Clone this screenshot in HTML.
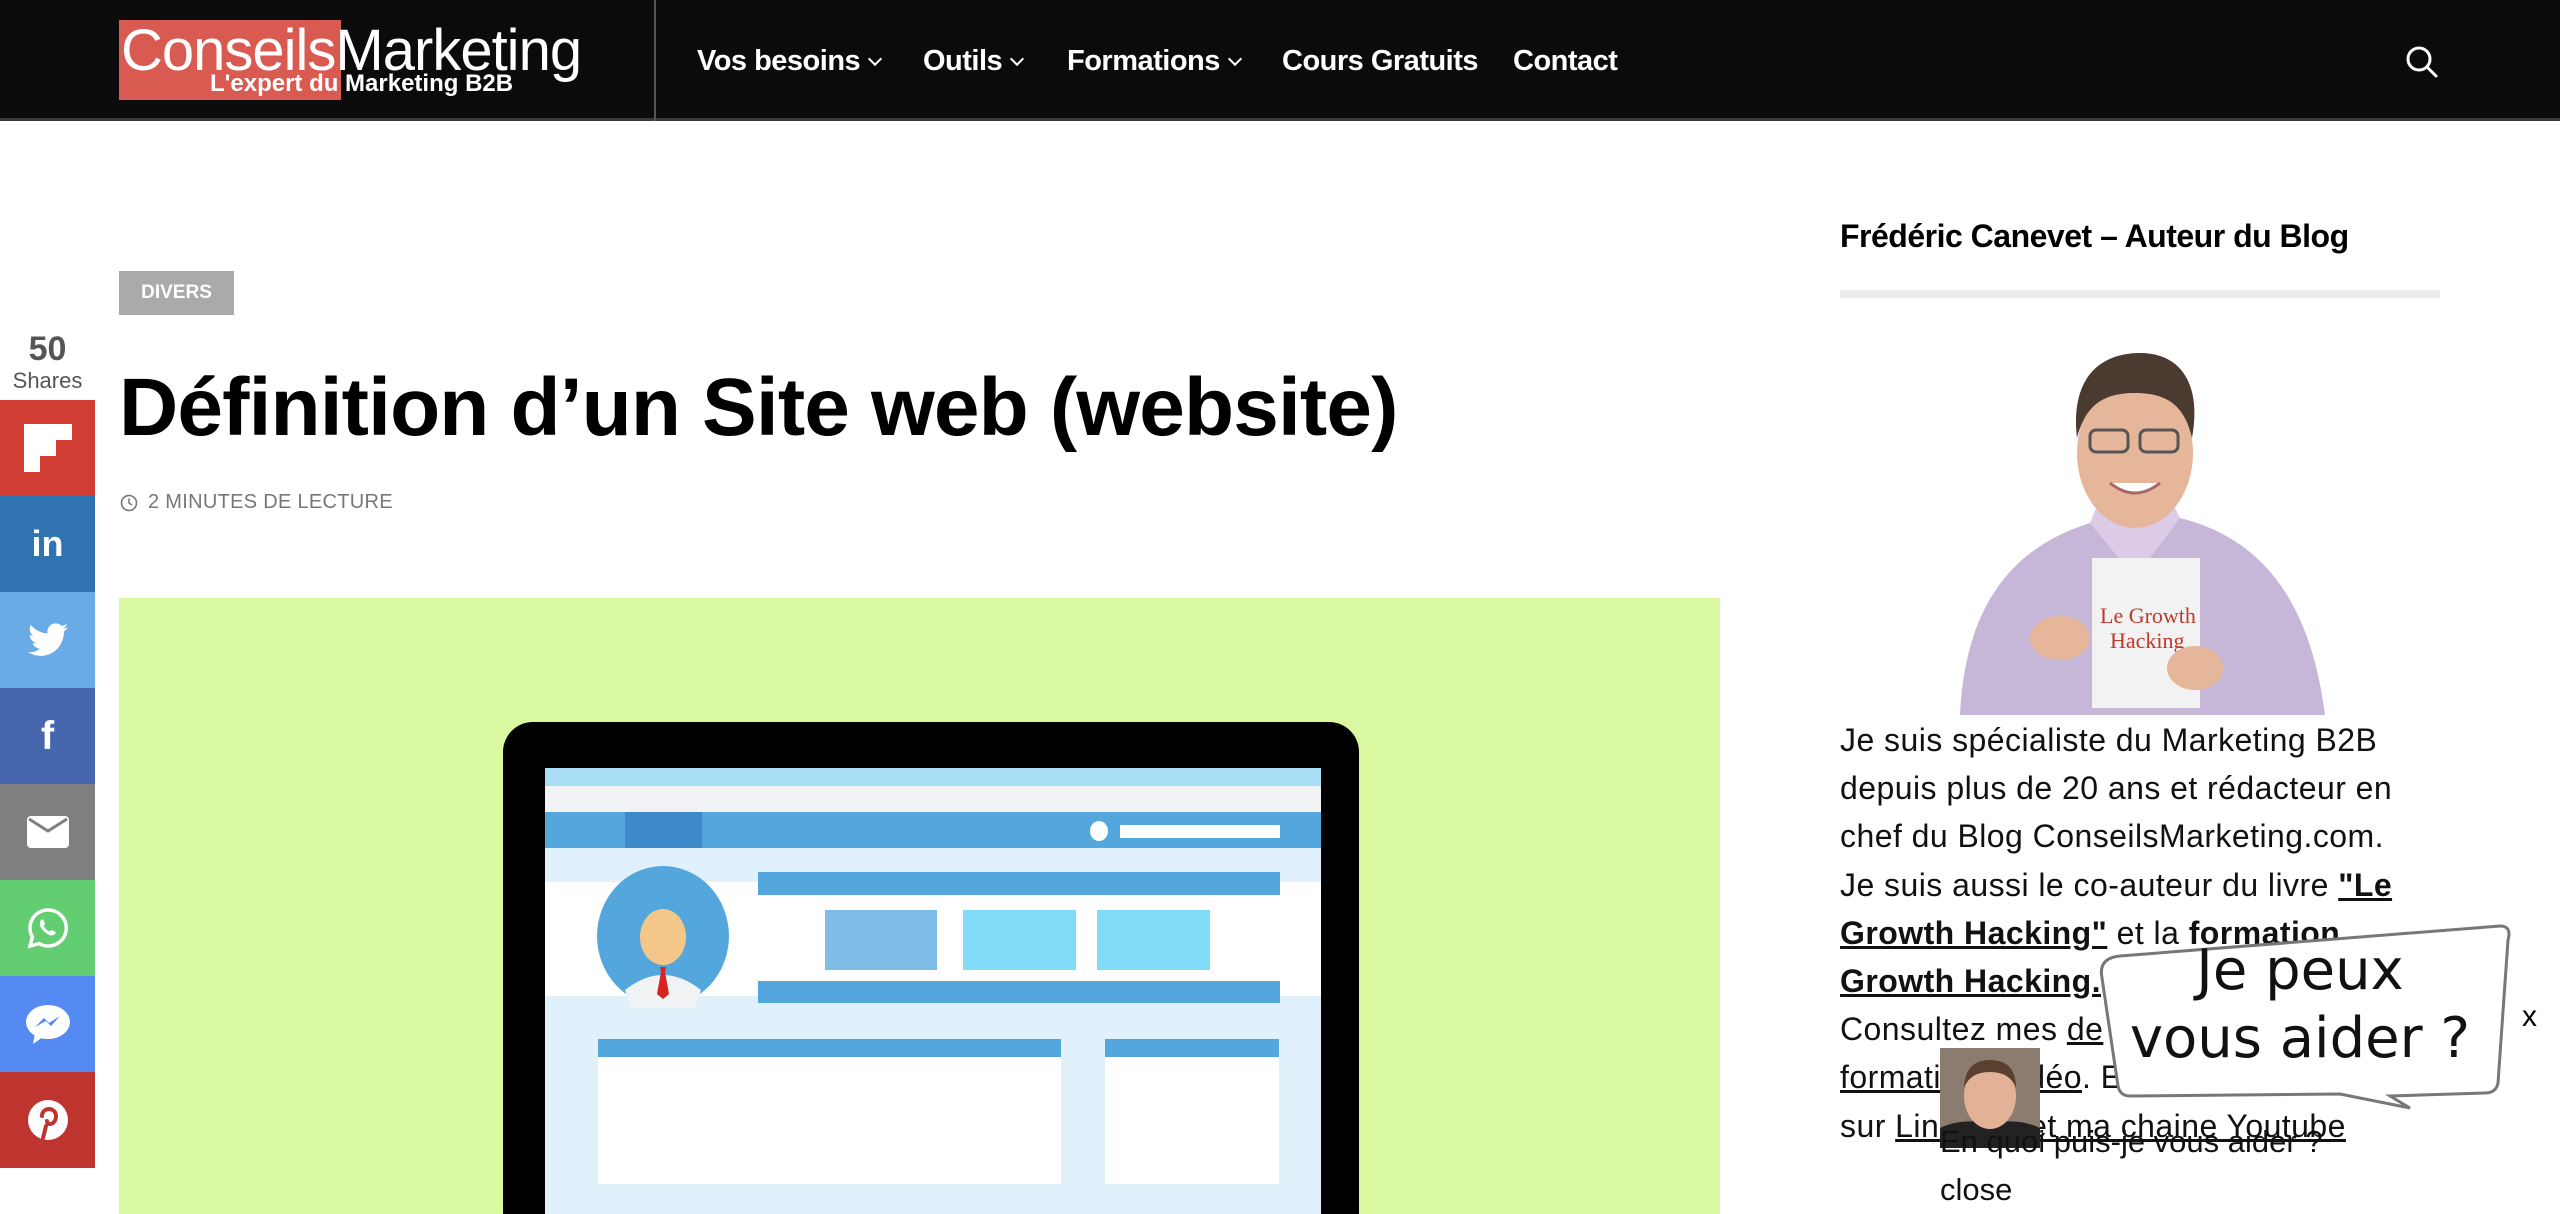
<!DOCTYPE html>
<html><head><meta charset="utf-8">
<style>
*{margin:0;padding:0;box-sizing:border-box}
body{width:2560px;height:1214px;overflow:hidden;background:#fff;font-family:"Liberation Sans",sans-serif;position:relative;color:#000}
.hdr{position:absolute;left:0;top:0;width:2560px;height:121px;background:#0b0b0b;border-bottom:3px solid #3a3a3a}
.nav{position:absolute;top:45px;color:#fff;font-weight:bold;font-size:29px;letter-spacing:-0.5px;white-space:nowrap}
.chev{display:inline-block;width:10px;height:10px;border-right:2.5px solid #fff;border-bottom:2.5px solid #fff;transform:rotate(45deg);margin-left:10px;position:relative;top:-6px}
.abs{position:absolute}
.sb{position:absolute;left:0;width:95px;height:96px;display:flex;align-items:center;justify-content:center}
.side{position:absolute;left:1840px;top:716px;font-size:32px;letter-spacing:0.45px;line-height:48.2px;white-space:nowrap;color:#111}
.side u,.side b{text-decoration:underline}
</style></head><body>
<div class="hdr"></div>
<!-- logo -->
<div class="abs" style="left:119px;top:20px;width:222px;height:80px;background:#d85a50"></div>
<div class="abs" style="left:121px;top:16px;font-size:58px;color:#fff;letter-spacing:-1px;white-space:nowrap;line-height:70px">ConseilsMarketing</div>
<div class="abs" style="left:210px;top:70px;font-size:24px;color:#fff;font-weight:bold;white-space:nowrap">L'expert du Marketing B2B</div>
<div class="abs" style="left:654px;top:0;width:2px;height:121px;background:#555"></div>
<div class="nav" style="left:697px">Vos besoins<span class="chev"></span></div>
<div class="nav" style="left:923px">Outils<span class="chev"></span></div>
<div class="nav" style="left:1067px">Formations<span class="chev"></span></div>
<div class="nav" style="left:1282px">Cours Gratuits</div>
<div class="nav" style="left:1513px">Contact</div>
<svg class="abs" style="left:2404px;top:44px" width="36" height="36" viewBox="0 0 36 36"><circle cx="15" cy="15" r="11" fill="none" stroke="#fff" stroke-width="3"/><line x1="23" y1="23" x2="32" y2="32" stroke="#fff" stroke-width="3" stroke-linecap="round"/></svg>

<!-- share bar -->
<div class="abs" style="left:0;top:330px;width:95px;text-align:center;font-size:34px;color:#555;font-weight:bold;line-height:38px">50</div>
<div class="abs" style="left:0;top:368px;width:95px;text-align:center;font-size:22px;color:#555">Shares</div>
<div class="sb" style="top:400px;background:#d13c33"><svg width="48" height="48" viewBox="0 0 48 48"><path d="M0 0H48V16H32V32H16V48H0Z" fill="#fff"/></svg></div>
<div class="sb" style="top:496px;background:#2f74b0;color:#fff;font-weight:bold;font-size:36px">in</div>
<div class="sb" style="top:592px;background:#69abe7"><svg width="40" height="34" viewBox="0 0 24 20"><path d="M24 2.4a10 10 0 0 1-2.8.8A5 5 0 0 0 23.3.4a10 10 0 0 1-3.1 1.2A4.9 4.9 0 0 0 11.8 6 14 14 0 0 1 1.7.9a4.9 4.9 0 0 0 1.5 6.6A4.9 4.9 0 0 1 1 6.9a4.9 4.9 0 0 0 3.9 4.8 4.9 4.9 0 0 1-2.2.1 4.9 4.9 0 0 0 4.6 3.4A9.900 9.900 0 0 1 0 17.3 14 14 0 0 0 7.5 19.5c9.100 0 14-7.500 14-14v-.6A10 10 0 0 0 24 2.4z" fill="#fff"/></svg></div>
<div class="sb" style="top:688px;background:#4666ad;color:#fff;font-weight:bold;font-size:40px">f</div>
<div class="sb" style="top:784px;background:#7f7f7f"><svg width="42" height="32" viewBox="0 0 42 32"><rect width="42" height="32" rx="4" fill="#fff"/><path d="M2 3L21 15L40 3" fill="none" stroke="#7f7f7f" stroke-width="3"/></svg></div>
<div class="sb" style="top:880px;background:#63cd72"><svg width="42" height="42" viewBox="0 0 42 42"><path d="M21 3a18 18 0 0 0-15.6 27L3 39l9.300-2.400A18 18 0 1 0 21 3z" fill="none" stroke="#fff" stroke-width="3.5"/><path d="M14 13c1-1 2-1 3 1l1 3-1.500 1.500c1 2.500 3.500 5 6 6L24 23l3 1c2 1 2 2 1 3-2 2-5 2-9-1s-6-6-6-9c0-1.500 0-3 1-4z" fill="#fff"/></svg></div>
<div class="sb" style="top:976px;background:#548af1"><svg width="46" height="42" viewBox="0 0 46 42"><ellipse cx="23" cy="19" rx="22" ry="17" fill="#fff"/><path d="M10 30L8 41L18 34Z" fill="#fff"/><path d="M10 24L19 15L24 20L35 13L26 23L21 18Z" fill="#548af1"/></svg></div>
<div class="sb" style="top:1072px;background:#be3530"><svg width="42" height="42" viewBox="0 0 42 42"><circle cx="21" cy="21" r="20" fill="#fff"/><path d="M19 27l-3 12M15 17c0-4 3-7 7-7 4 0 7 3 7 7 0 5-3 8-6 8-2 0-3-1-3-3" fill="none" stroke="#be3530" stroke-width="4" stroke-linecap="round"/></svg></div>

<!-- article -->
<div class="abs" style="left:119px;top:271px;width:115px;height:44px;background:#aaa;color:#fff;font-size:19px;font-weight:bold;text-align:center;line-height:44px">DIVERS</div>
<div class="abs" style="left:119px;top:358px;font-size:82px;font-weight:bold;letter-spacing:-0.85px;white-space:nowrap;line-height:100px">Définition d’un Site web (website)</div>
<svg class="abs" style="left:120px;top:494px" width="18" height="18" viewBox="0 0 18 18"><circle cx="9" cy="9" r="7.500" fill="none" stroke="#777" stroke-width="1.600"/><path d="M9 4.500V9L12 11" fill="none" stroke="#777" stroke-width="1.600"/></svg>
<div class="abs" style="left:148px;top:491px;font-size:20px;color:#777;letter-spacing:0.3px">2 MINUTES DE LECTURE</div>

<!-- image -->
<div class="abs" style="left:119px;top:598px;width:1601px;height:616px;background:#d9f8a0;overflow:hidden">
<svg width="1601" height="616" viewBox="119 598 1601 616">
<rect x="503" y="722" width="856" height="520" rx="30" fill="#000"/>
<rect x="545" y="768" width="776" height="460" fill="#e1f1fb"/>
<rect x="545" y="768" width="776" height="18" fill="#a9ddf6"/>
<rect x="545" y="786" width="776" height="26" fill="#f1f2f3"/>
<rect x="545" y="812" width="776" height="36" fill="#54a7dd"/>
<rect x="625" y="812" width="77" height="36" fill="#3d89c9"/>
<ellipse cx="1099" cy="831" rx="9" ry="10" fill="#fff"/>
<rect x="1120" y="825" width="160" height="13" fill="#fff"/>
<rect x="545" y="882" width="776" height="114" fill="#fff"/>
<ellipse cx="663" cy="936" rx="66" ry="70" fill="#54a7dd"/>
<path d="M625 990Q663 960 701 990L695 1008H631Z" fill="#f1f2f3"/>
<ellipse cx="663" cy="937" rx="23" ry="28" fill="#f4c788"/>
<path d="M660 967h6l-1 5 4 22-6 5-6-5 4-22z" fill="#d8231f"/>
<rect x="758" y="872" width="522" height="23" fill="#54a7dd"/>
<rect x="825" y="910" width="112" height="60" fill="#7fbde6"/>
<rect x="963" y="910" width="113" height="60" fill="#80dcf8"/>
<rect x="1097" y="910" width="113" height="60" fill="#80dcf8"/>
<rect x="758" y="981" width="522" height="22" fill="#54a7dd"/>
<rect x="598" y="1039" width="463" height="18" fill="#54a7dd"/>
<rect x="598" y="1057" width="463" height="127" fill="#fff"/>
<rect x="1105" y="1039" width="174" height="18" fill="#54a7dd"/>
<rect x="1105" y="1057" width="174" height="127" fill="#fff"/>
</svg></div>

<!-- sidebar -->
<div class="abs" style="left:1840px;top:218px;font-size:32px;font-weight:bold;letter-spacing:-0.5px;white-space:nowrap">Frédéric Canevet – Auteur du Blog</div>
<div class="abs" style="left:1840px;top:290px;width:600px;height:8px;background:#ebebeb"></div>
<svg class="abs" style="left:1940px;top:348px" width="400" height="367" viewBox="0 0 400 367">
<path d="M20 367C25 260 70 200 150 175L195 190L240 170C320 190 370 250 385 367Z" fill="#c6b6d8"/>
<path d="M150 175L195 230L240 170L230 150H160Z" fill="#dccbe6"/>
<ellipse cx="195" cy="105" rx="58" ry="75" fill="#e6b69a"/>
<path d="M137 90C130 30 160 5 200 5C240 5 262 35 252 90C245 60 230 45 195 45C160 45 145 60 137 90Z" fill="#4a3a30"/>
<rect x="150" y="82" width="38" height="22" rx="6" fill="none" stroke="#555" stroke-width="3"/>
<rect x="200" y="82" width="38" height="22" rx="6" fill="none" stroke="#555" stroke-width="3"/>
<path d="M170 135Q195 155 220 135" fill="#fff" stroke="#a66" stroke-width="3"/>
<rect x="152" y="210" width="108" height="150" fill="#f2f2f2"/>
<text x="160" y="275" font-family="Liberation Serif" font-size="22" fill="#c0392b">Le Growth</text>
<text x="170" y="300" font-family="Liberation Serif" font-size="22" fill="#c0392b">Hacking</text>
<ellipse cx="120" cy="290" rx="30" ry="22" fill="#e6b69a"/>
<ellipse cx="255" cy="320" rx="28" ry="22" fill="#e6b69a"/>
</svg>
<div class="side">Je suis spécialiste du Marketing B2B<br>depuis plus de 20 ans et rédacteur en<br>chef du Blog ConseilsMarketing.com.<br>Je suis aussi le co-auteur du livre <b>"Le</b><br><b>Growth Hacking"</b> et la <strong>formation</strong><br><b>Growth Hacking.</b><br>Consultez mes <u>de</u><br><u>formations vidéo</u>. Et gardons contact<br>sur <u>LinkedIn et ma chaine Youtube</u></div>

<!-- chat bubble -->
<svg class="abs" style="left:2090px;top:918px" width="425" height="200" viewBox="0 0 425 200">
<path d="M12 60Q8 40 30 38L410 8Q422 8 418 22L408 165Q406 175 395 175L300 178L320 190L250 176L40 178Q30 178 28 168Z" fill="#fff" stroke="#777" stroke-width="3"/>
</svg>
<div class="abs" style="left:2100px;top:937px;width:400px;text-align:center;font-family:'DejaVu Sans',sans-serif;font-size:56px;line-height:68px;color:#111">Je peux<br>vous aider ?</div>
<div class="abs" style="left:2522px;top:1000px;font-size:30px">x</div>
<svg class="abs" style="left:1940px;top:1048px" width="100" height="100" viewBox="0 0 100 100">
<rect width="100" height="100" fill="#8a7d70"/>
<path d="M0 100V80Q20 70 50 75Q80 70 100 80V100Z" fill="#222"/>
<ellipse cx="50" cy="48" rx="26" ry="33" fill="#e2b196"/>
<path d="M24 40Q25 12 50 12Q76 12 76 40Q70 24 50 24Q30 24 24 40Z" fill="#5a4030"/>
</svg>
<div class="abs" style="left:1940px;top:1124px;font-size:31px;color:#111;white-space:nowrap">En quoi puis-je vous aider ?</div>
<div class="abs" style="left:1940px;top:1172px;font-size:31px;color:#111">close</div>
</body></html>
